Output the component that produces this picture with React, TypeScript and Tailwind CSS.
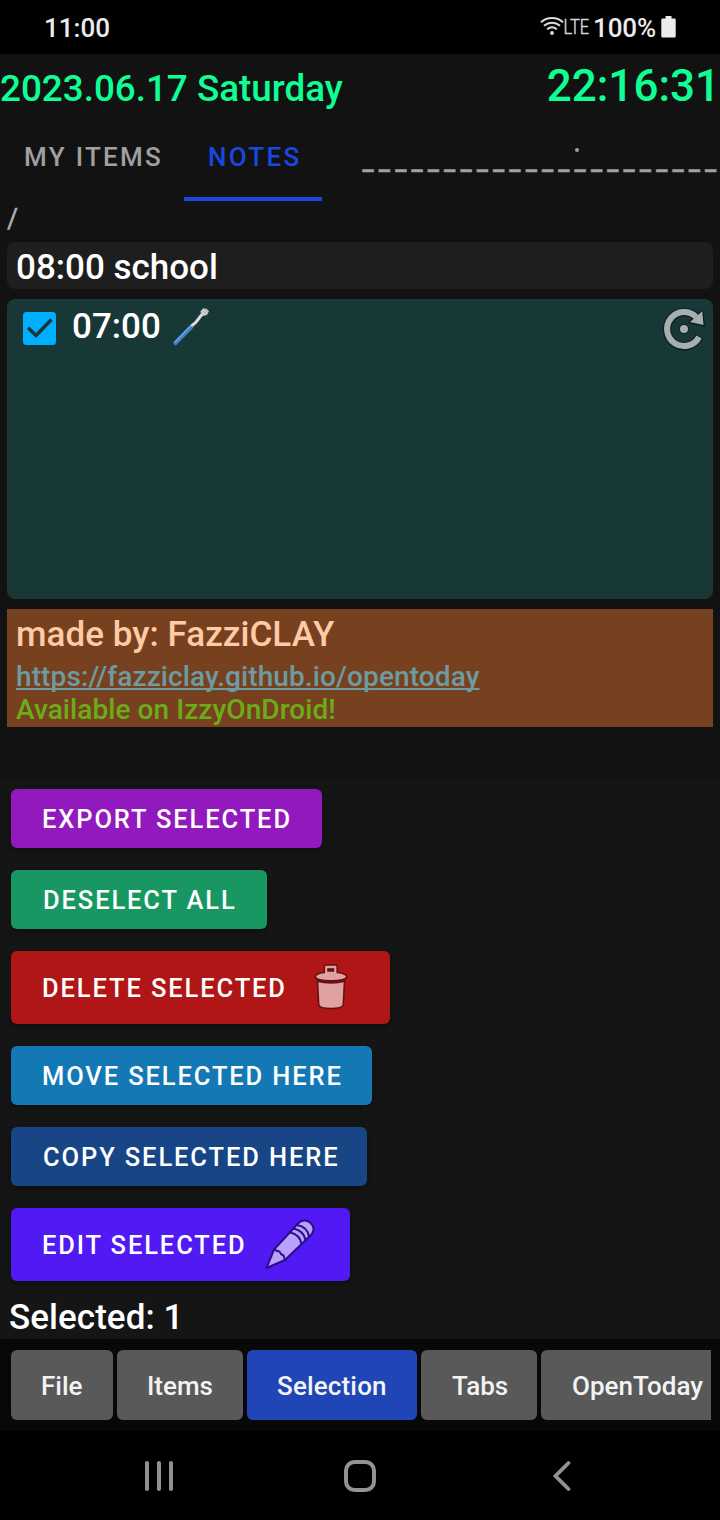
import React from "react";

function StatusBar() {
  return (
    <div className="flex h-[54px] items-center bg-black pl-[44px] pr-[44px] text-[26px] font-medium text-[#ececec]">
      <span className="pt-[2px] leading-none">11:00</span>
      <div className="ml-auto flex items-center">
        <svg width="24" height="20" viewBox="0 0 24 20" fill="none" stroke="#d8d8d8" strokeWidth="2.1" className="-mt-[2px]">
          <path d="M1 6.2C7.2.6 16.8.6 23 6.2" />
          <path d="M4 9.8c4.7-4.1 11.3-4.1 16 0" />
          <path d="M7.2 13.2c2.8-2.4 6.8-2.4 9.6 0" />
          <circle cx="12" cy="17" r="1.9" fill="#d8d8d8" stroke="none" />
        </svg>
        <svg width="28" height="30" viewBox="0 0 28 30" aria-label="LTE" className="mr-[1px]">
          <text x="-0.500" y="22" fontFamily="Roboto" fontSize="20" fontWeight="300" fill="#d8d8d8" stroke="#d8d8d8" strokeWidth=".5" textLength="25.500" lengthAdjust="spacingAndGlyphs">LTE</text>
        </svg>
        <span className="w-[68px] whitespace-nowrap pt-[2px] leading-none tracking-[-0.1px]">100%</span>
        <svg width="15" height="22" viewBox="0 0 15 22" fill="#ececec">
          <path d="M4.5 0h6v2.5h3A1.2 1.2 0 0 1 14.700 3.700v16.500a1.200 1.200 0 0 1-1.200 1.200h-12A1.200 1.200 0 0 1 .3 20.200V3.700a1.200 1.200 0 0 1 1.200-1.200h3z" />
        </svg>
      </div>
    </div>
  );
}

function Header() {
  return (
    <div className="flex h-[68px] justify-between overflow-hidden font-medium text-[#0fff94]">
      <span className="pt-[15px] text-[36.8px] leading-[40px] whitespace-nowrap">2023.06.17 Saturday</span>
      <span className="pt-[12px] text-[44px] leading-[40px] whitespace-nowrap">22:16:31</span>
    </div>
  );
}

function Tabs() {
  return (
    <div className="flex h-[79px] overflow-hidden text-[26px] font-medium leading-[70px] tracking-[2.3px] whitespace-nowrap text-[#a0a0a0]">
      <div className="w-[184px] pl-[24px]">MY ITEMS</div>
      <div className="w-[138px] border-b-4 border-[#1848e0] pl-[24px] text-[#1848e0]">NOTES</div>
      <div className="relative w-[398px] pl-[40.500px] pt-[5px] text-[25px] tracking-[5.120px] [-webkit-text-stroke:0.5px_#a0a0a0]">
        ______________________
        <span className="absolute left-[252.500px] top-[25.500px] size-[4px] rounded-full bg-[#a0a0a0]" />
      </div>
    </div>
  );
}

function Toothbrush() {
  return (
    <svg width="38" height="38" viewBox="0 0 38 38" fill="none" strokeLinecap="round">
      <path d="M3.500 35L20 18" stroke="#3f82c8" strokeWidth="4.200" />
      <path d="M3.200 34L19 17.500" stroke="#6aa6e4" strokeWidth="1.400" />
      <path d="M20.500 17C25.500 14 25 12 30 6.500" stroke="#deddd9" strokeWidth="3" />
      <path d="M28.800 3.500L31 .8Q35 .5 36.500 3L35 6.500Q31.500 8 30.500 7Z" fill="#d4d4cf" stroke="#c2c2be" strokeWidth=".8" />
      <path d="M31 3l3 3M33 2l2 2" stroke="#9a9a96" strokeWidth=".8" />
    </svg>
  );
}

function Repeat() {
  return (
    <svg width="44" height="44" viewBox="0 0 44 44" strokeLinejoin="round">
      <path d="M37.500 29.400A17 17 0 1 1 34.100 10.300" fill="none" stroke="#10211f" strokeWidth="8.500" />
      <path d="M40.300 4.200L41.800 18.200L27.500 15Z" fill="#10211f" stroke="#10211f" strokeWidth="2.500" />
      <path d="M37.100 30A17 17 0 1 1 34.100 10" fill="none" stroke="#a2b0af" strokeWidth="6" />
      <path d="M40.300 4.200L41.500 18L28 15Z" fill="#a2b0af" />
      <circle cx="22" cy="22" r="5" fill="#10211f" />
      <circle cx="22" cy="22" r="4" fill="#a2b0af" />
    </svg>
  );
}

function Items() {
  return (
    <div className="flex flex-col px-[7px]">
      <div className="h-[41px] text-[27px] leading-[37px] text-[#b0b0b0] [-webkit-text-stroke:0.4px_#b0b0b0]">/</div>
      <div className="h-[47px] rounded-[8px] bg-[#1e1e1e] pl-[9px] text-[35px] font-medium leading-[51px] text-white">08:00 school</div>
      <div className="mt-[10px] flex h-[300px] items-start rounded-[8px] bg-[#183837] pl-[16px] text-white">
        <svg width="33" height="33" viewBox="0 0 33 33" className="mt-[13px]">
          <rect width="33" height="33" rx="3.500" fill="#00aeff" />
          <path d="M5 15.800L13 23.500L28.500 7.500" fill="none" stroke="#183837" strokeWidth="3.500" />
        </svg>
        <span className="ml-[16px] w-[100px] text-[35px] font-medium leading-[55px]">07:00</span>
        <span className="mt-[9px]"><Toothbrush /></span>
        <span className="ml-auto mr-[7px] mt-[8px]"><Repeat /></span>
      </div>
      <div className="mt-[10px] flex h-[118px] flex-col bg-[#774120] pl-[9px] font-medium whitespace-nowrap">
        <span className="h-[51px] text-[35px] leading-[52px] tracking-[0.05px] text-[#ffcaa6]">made by: FazziCLAY</span>
        <span className="h-[33px] text-[28px] leading-[33px] tracking-[0.11px] text-[#6d9ba2] underline decoration-2 underline-offset-[2px] [text-decoration-skip-ink:none]">https://fazziclay.github.io/opentoday</span>
        <span className="h-[33px] text-[28px] leading-[33px] tracking-[0.07px] text-[#6bad18]">Available on IzzyOnDroid!</span>
      </div>
    </div>
  );
}

function Trash() {
  return (
    <svg width="36" height="48" viewBox="0 0 36 48" fill="#e0a1a2" stroke="#641011" strokeWidth="1.600" strokeLinejoin="round">
      <path d="M4.500 18.500H31.500L30.300 41.500Q29.800 45.500 18 45.500T5.700 41.500Z" />
      <path d="M4 17Q18 21.500 32 17" strokeWidth="3" fill="none" />
      <path d="M11.300 9.500V3.500Q11.300 2 12.800 2H22.700Q24.200 2 24.200 3.500V9.500Q33.800 10.500 33.800 14Q33 17.700 18 17.700T2.200 14Q2.200 10.500 11.300 9.500Z" />
      <path d="M14.200 5.200h7v3.500h-7z" fill="#641011" stroke="none" />
    </svg>
  );
}

function Pencil() {
  return (
    <svg width="52" height="52" viewBox="0 0 52 52" fill="#b9a0fa" stroke="#2b0d8c" strokeWidth="2" strokeLinejoin="round" strokeLinecap="round">
      <path d="M2.500 50L10 31.500L34.500 5Q40 0 46 4.500Q52.500 10 47.500 16.500L21 42Z" />
      <path d="M10.500 31.500Q13 33.500 15.500 33.500Q16.500 36.500 19.500 37.500Q20.500 40 21 42" fill="none" strokeWidth="2" />
      <path d="M26 14.500Q36 16.500 37.500 26M29.500 10.500Q40 13 41.500 22M33 7Q43.500 9 45 18.500" fill="none" strokeWidth="2" />
    </svg>
  );
}

const actions = [
  { label: "EXPORT SELECTED", box: "w-[311px] h-[59px] pl-[31px] bg-[#9119bd]" },
  { label: "DESELECT ALL", box: "w-[256px] h-[59px] pl-[32px] bg-[#199762]" },
  { label: "DELETE SELECTED", box: "w-[379px] h-[73px] pl-[31px] bg-[#b11617]", icon: <Trash />, place: "left-[302px] top-[12px]" },
  { label: "MOVE SELECTED HERE", box: "w-[361px] h-[59px] pl-[31px] bg-[#1378b3]" },
  { label: "COPY SELECTED HERE", box: "w-[356px] h-[59px] pl-[32px] bg-[#184585]" },
  { label: "EDIT SELECTED", box: "w-[339px] h-[73px] pl-[31px] bg-[#5119f3]", icon: <Pencil />, place: "left-[253px] top-[10px]" },
];

function SelectionPanel() {
  return (
    <div className="mt-[52px] flex h-[560px] flex-col items-start gap-[22px] bg-[#151515] pl-[11px] pt-[10px]">
      {actions.map((a) => (
        <button key={a.label} className={`relative flex shrink-0 items-center rounded-[6px] pt-[2px] text-[25.5px] font-medium tracking-[1.880px] whitespace-nowrap text-white shadow-[0_2px_4px_rgba(0,0,0,0.4)] ${a.box}`}>
          {a.label}
          {a.icon && <span className={`absolute ${a.place}`}>{a.icon}</span>}
        </button>
      ))}
      <div className="-mt-[7px] -ml-[2px] text-[35px] font-medium leading-[44px] tracking-[0.05px] text-white">Selected: 1</div>
    </div>
  );
}

const sections = [
  { label: "File", box: "w-[102px] pl-[30px] rounded-[6px] bg-[#595959]" },
  { label: "Items", box: "w-[126px] pl-[30px] rounded-[6px] bg-[#595959]" },
  { label: "Selection", box: "w-[170px] pl-[30px] rounded-[6px] bg-[#2045b7] tracking-[0.15px]" },
  { label: "Tabs", box: "w-[116px] pl-[31px] rounded-[6px] bg-[#595959]" },
  { label: "OpenToday", box: "w-[170px] pl-[31px] rounded-l-[6px] bg-[#595959]" },
];

function Toolbar() {
  return (
    <div className="flex h-[92px] gap-[4px] bg-[#080808] px-[11px] pt-[11px]">
      {sections.map((s) => (
        <button key={s.label} className={`flex h-[70px] shrink-0 items-center pt-[2px] text-[26px] font-medium whitespace-nowrap text-[#f3f3f3] ${s.box}`}>
          {s.label}
        </button>
      ))}
    </div>
  );
}

function NavBar() {
  return (
    <div className="flex h-[89px] items-center bg-black pl-[144px]">
      <svg width="30" height="32" viewBox="0 0 30 32" stroke="#929292" strokeWidth="4" strokeLinecap="round">
        <path d="M3 3V29M15 3V29M27 3V29" />
      </svg>
      <svg width="32" height="32" viewBox="0 0 32 32" fill="none" stroke="#929292" strokeWidth="4" className="ml-[170px]">
        <rect x="2" y="2" width="28" height="28" rx="8.500" />
      </svg>
      <svg width="18" height="32" viewBox="0 0 18 32" fill="none" stroke="#929292" strokeWidth="3.800" strokeLinecap="round" className="ml-[177px]">
        <path d="M15.500 3L2.500 16L15.500 29" />
      </svg>
    </div>
  );
}

export default function App() {
  return (
    <div className="flex h-[1520px] w-[720px] flex-col overflow-hidden bg-[#121212] font-['Roboto',sans-serif]">
      <StatusBar />
      <Header />
      <Tabs />
      <Items />
      <SelectionPanel />
      <Toolbar />
      <NavBar />
    </div>
  );
}
